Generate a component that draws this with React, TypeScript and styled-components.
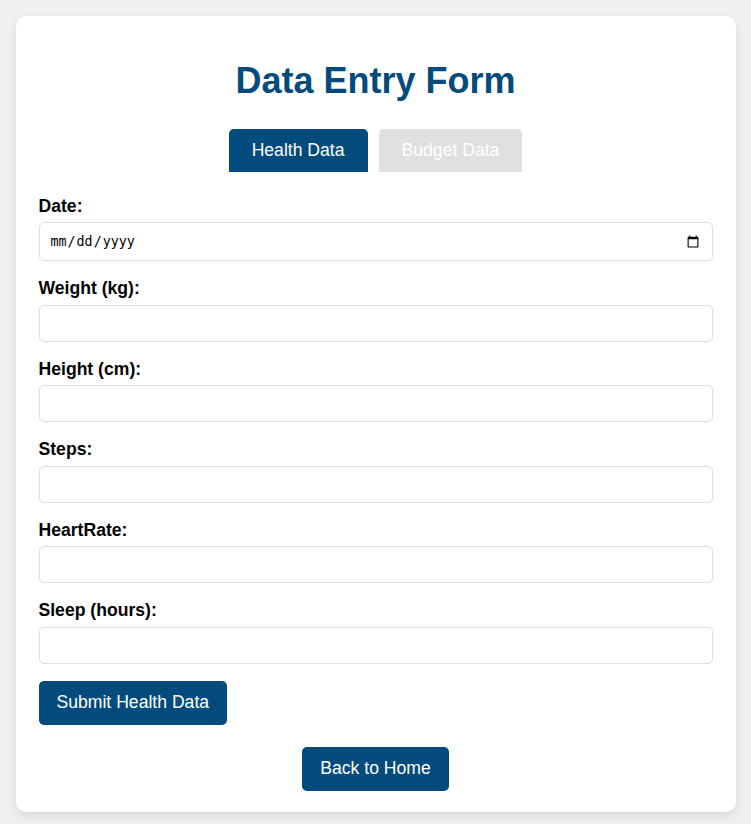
import React, { useState } from "react";
import styled, { createGlobalStyle } from "styled-components";

const GlobalStyle = createGlobalStyle`
  html, body {
    margin: 0;
    padding: 0;
    background: #f0f0f0;
    font-family: "Liberation Sans", Arial, sans-serif;
  }
  body {
    padding: 16px 0 12px;
  }
  * { box-sizing: border-box; }
`;

const Card = styled.div`
  max-width: 720px;
  margin: 0 auto;
  background: #ffffff;
  border-radius: 10px;
  box-shadow: 0 4px 10px rgba(0, 0, 0, 0.1);
  padding: 20px 23px 21px;
`;

const Title = styled.h1`
  margin: 24px 0 28px;
  text-align: center;
  color: #034b7c;
  font-size: 36px;
  line-height: 41px;
  font-weight: 700;
`;

const Tabs = styled.div`
  display: flex;
  justify-content: center;
  gap: 11px;
  margin-bottom: 23.5px;
`;

const Tab = styled.button<{ $active?: boolean }>`
  border: none;
  border-radius: 5px 5px 0 0;
  padding: 0 23px;
  height: 43px;
  font-family: "Liberation Sans", Arial, sans-serif;
  font-size: 17.6px;
  color: #ffffff;
  background: ${(p) => (p.$active ? "#034b7c" : "#e0e0e0")};
  cursor: pointer;
`;

const Form = styled.form`
  display: flex;
  flex-direction: column;
`;

const Field = styled.div`
  display: flex;
  flex-direction: column;
  margin-bottom: 17px;
`;

const Label = styled.label`
  font-weight: 700;
  font-size: 17.6px;
  line-height: 20px;
  color: #000;
  margin-bottom: 6.5px;
`;

const Input = styled.input`
  width: 100%;
  padding: 10px;
  border: 1px solid #dddddd;
  border-radius: 5px;
  background: #fff;
`;

const PrimaryButton = styled.button`
  background: #034b7c;
  color: #ffffff;
  border: none;
  border-radius: 5px;
  padding: 0 18px;
  height: 44px;
  font-family: "Liberation Sans", Arial, sans-serif;
  font-size: 17.6px;
  cursor: pointer;
`;

const SubmitRow = styled.div`
  display: flex;
`;

const HomeRow = styled.div`
  display: flex;
  justify-content: center;
  margin-top: 22px;
`;

const fields = [
  { label: "Date:", type: "date" },
  { label: "Weight (kg):", type: "number" },
  { label: "Height (cm):", type: "number" },
  { label: "Steps:", type: "number" },
  { label: "HeartRate:", type: "number" },
  { label: "Sleep (hours):", type: "number" },
];

export default function App() {
  const [tab, setTab] = useState("health");
  return (
    <>
      <GlobalStyle />
      <Card>
        <Title>Data Entry Form</Title>
        <Tabs>
          <Tab $active={tab === "health"} onClick={() => setTab("health")}>
            Health Data
          </Tab>
          <Tab $active={tab === "budget"} onClick={() => setTab("budget")}>
            Budget Data
          </Tab>
        </Tabs>
        <Form onSubmit={(e) => e.preventDefault()}>
          {fields.map((f) => (
            <Field key={f.label}>
              <Label>{f.label}</Label>
              <Input type={f.type} />
            </Field>
          ))}
          <SubmitRow>
            <PrimaryButton type="submit">Submit Health Data</PrimaryButton>
          </SubmitRow>
        </Form>
        <HomeRow>
          <PrimaryButton>Back to Home</PrimaryButton>
        </HomeRow>
      </Card>
    </>
  );
}
